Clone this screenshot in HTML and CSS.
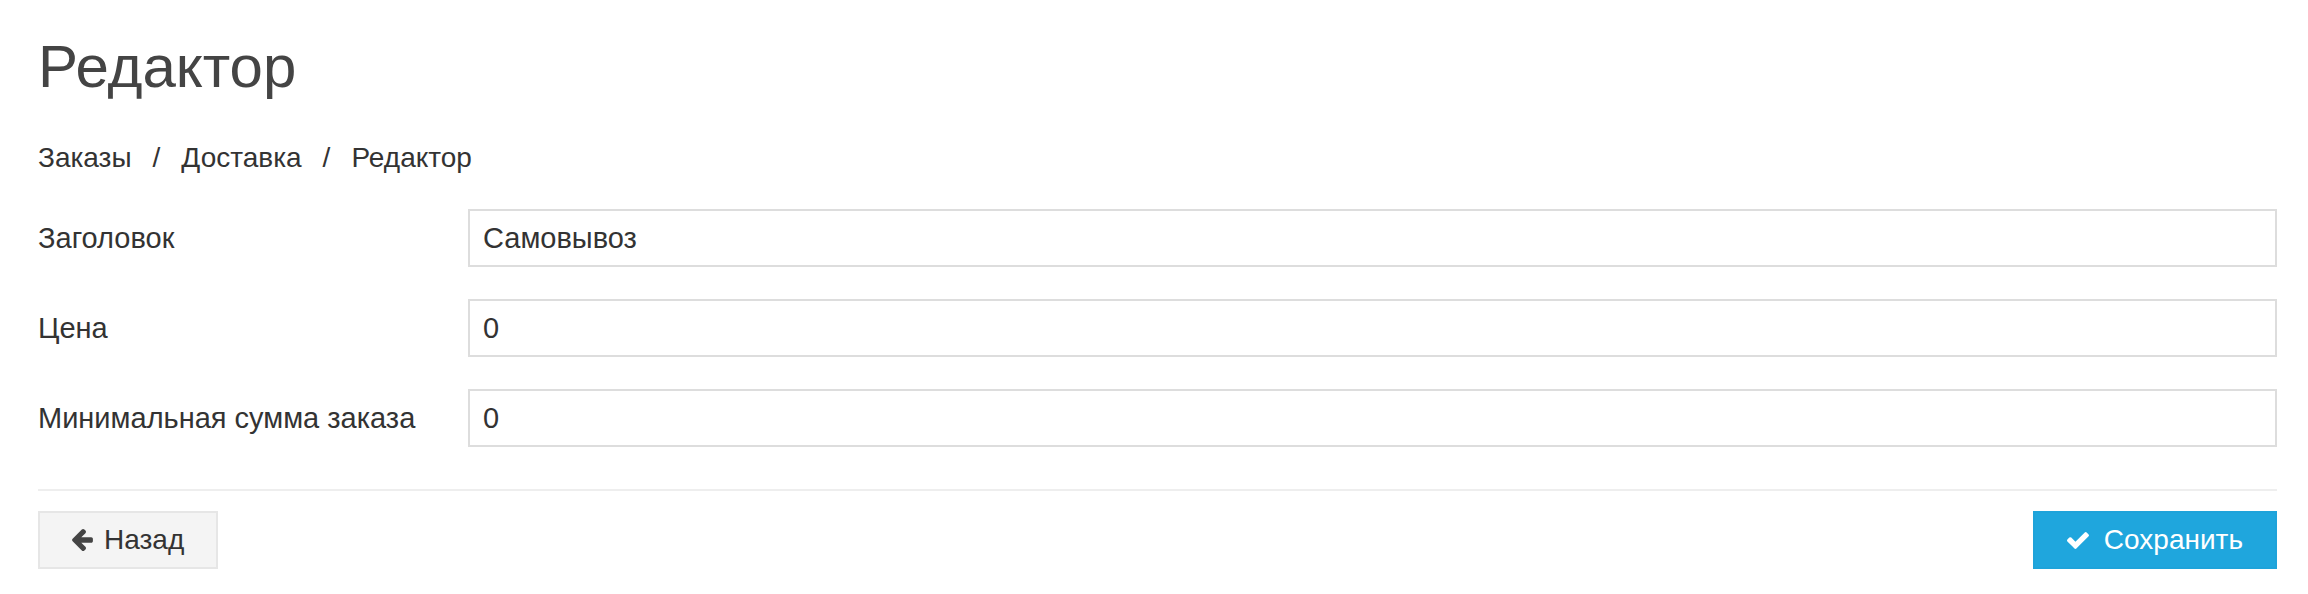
FILE: index.html
```html
<!DOCTYPE html>
<html lang="ru">
<head>
<meta charset="utf-8">
<title>Редактор</title>
<link rel="stylesheet" href="styles.css">
</head>
<body>
<div class="page">
  <h1 class="title">Редактор</h1>
  <nav class="crumbs">
    <span class="crumb">Заказы</span><span class="sep">/</span><span class="crumb">Доставка</span><span class="sep">/</span><span class="crumb">Редактор</span>
  </nav>
  <form class="form">
    <div class="row">
      <label class="label">Заголовок</label>
      <div class="input">Самовывоз</div>
    </div>
    <div class="row">
      <label class="label">Цена</label>
      <div class="input">0</div>
    </div>
    <div class="row">
      <label class="label">Минимальная сумма заказа</label>
      <div class="input">0</div>
    </div>
  </form>
  <hr class="divider">
  <div class="actions">
    <button class="btn btn-back" type="button">
      <svg class="icon icon-arrow" viewBox="192 181 1472 1558" width="21" height="22"><path fill="currentColor" d="M1664 896v128q0 53-32.5 90.5t-84.5 37.5h-704l293 294q38 36 38 90t-38 90l-75 76q-37 37-90 37-52 0-91-37l-651-652q-37-37-37-90 0-52 37-91l651-650q38-38 91-38 52 0 90 38l75 74q38 38 38 91t-38 91l-293 293h704q52 0 84.5 37.5t32.5 90.5z"/></svg>
      <span>Назад</span>
    </button>
    <button class="btn btn-save" type="button">
      <svg class="icon icon-check" viewBox="121 334 1550 1188" width="22" height="17"><path fill="currentColor" d="M1671 566q0 40-28 68l-724 724-136 136q-28 28-68 28t-68-28l-136-136-362-362q-28-28-28-68t28-68l136-136q28-28 68-28t68 28l294 295 656-657q28-28 68-28t68 28l136 136q28 28 28 68z"/></svg>
      <span>Сохранить</span>
    </button>
  </div>
</div>
</body>
</html>
```
FILE: styles.css
```css
html, body {
  margin: 0;
  padding: 0;
  background: #fff;
}
body {
  font-family: "Liberation Sans", Arial, sans-serif;
  color: #333;
}
.page {
  padding: 35px 31px 0 38px;
}
.title {
  margin: 0;
  font-size: 60px;
  line-height: 63px;
  font-weight: 400;
  color: #444;
}
.crumbs {
  margin-top: 40px;
  font-size: 28px;
  line-height: 40px;
  color: #333;
}
.sep {
  margin: 0 21px;
}
.form {
  margin-top: 31px;
  display: flex;
  flex-direction: column;
  gap: 32px;
}
.row {
  display: grid;
  grid-template-columns: 430px 1fr;
  align-items: center;
}
.label {
  font-size: 29px;
  color: #333;
}
.input {
  height: 58px;
  box-sizing: border-box;
  border: 2px solid #ddd;
  padding: 0 13px;
  font-size: 29px;
  color: #333;
  display: flex;
  align-items: center;
}
.divider {
  margin: 42px 0 0;
  border: 0;
  border-top: 2px solid #eee;
  height: 0;
}
.actions {
  margin-top: 20px;
  display: flex;
  justify-content: space-between;
}
.btn {
  height: 58px;
  box-sizing: border-box;
  padding: 0 32px;
  display: flex;
  align-items: center;
  font-family: "Liberation Sans", Arial, sans-serif;
  font-size: 28px;
  cursor: pointer;
}
.btn-back {
  gap: 11px;
  background: #f4f4f4;
  border: 2px solid #e6e6e6;
  color: #333;
}
.btn-back .icon {
  color: #444;
}
.btn-save {
  gap: 15px;
  background: #1fa6dd;
  border: 2px solid #1ea3da;
  color: #fff;
}
.icon {
  display: block;
  flex: none;
}
```
